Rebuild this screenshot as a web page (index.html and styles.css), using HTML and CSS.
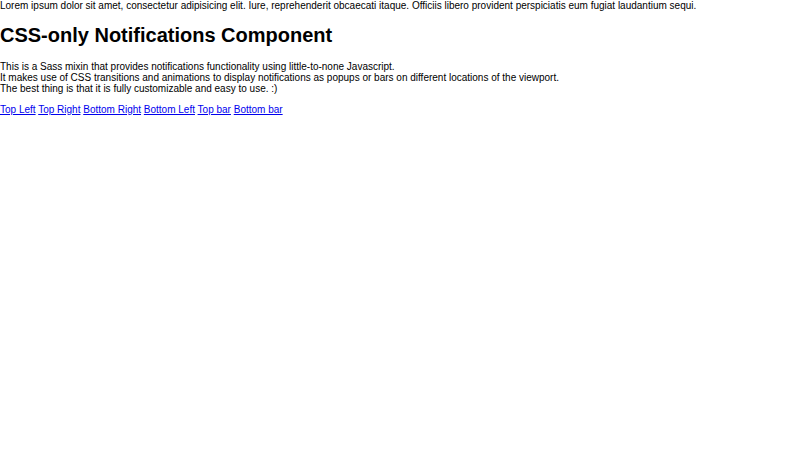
FILE: index.html
```
<!DOCTYPE html>
<html>
<head>
<meta charset="utf-8">
<link rel="stylesheet" href="styles.css">
</head>
<body>
<div class="lead">Lorem ipsum dolor sit amet, consectetur adipisicing elit. Iure, reprehenderit obcaecati itaque. Officiis libero provident perspiciatis eum fugiat laudantium sequi.</div>
<h1 class="title">CSS-only Notifications Component</h1>
<p class="desc">This is a Sass mixin that provides notifications functionality using little-to-none Javascript.<br>It makes use of CSS transitions and animations to display notifications as popups or bars on different locations of the viewport.<br>The best thing is that it is fully customizable and easy to use. :)</p>
<div class="links"><a href="#">Top Left</a> <a href="#">Top Right</a> <a href="#">Bottom Right</a> <a href="#">Bottom Left</a> <a href="#">Top bar</a> <a href="#">Bottom bar</a></div>
</body>
</html>
```
FILE: styles.css
```
html, body {
  margin: 0;
  padding: 0;
  background: #fff;
}
body {
  font-family: "Liberation Sans", Arial, sans-serif;
  font-size: 10px;
  color: #000;
}
.title {
  font-size: 2em;
  margin: 0.67em 0;
  font-weight: bold;
}
.desc {
  margin: 10px 0;
}
.links a {
  color: #0000ee;
}
```
